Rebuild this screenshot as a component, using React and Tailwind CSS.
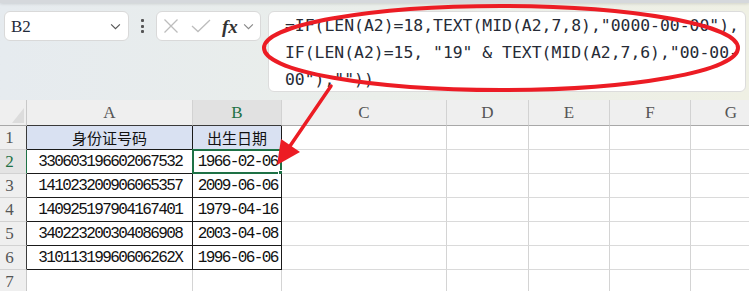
import React from "react";

const COLS = [
  { k: "A", w: "w-[166px]" },
  { k: "B", w: "w-[89px]" },
  { k: "C", w: "w-[165px]" },
  { k: "D", w: "w-[82px]" },
  { k: "E", w: "w-[81px]" },
  { k: "F", w: "w-[81px]" },
  { k: "G", w: "w-[81px]" },
];

const DATA = [
  ["身份证号码", "出生日期"],
  ["330603196602067532", "1966-02-06"],
  ["141023200906065357", "2009-06-06"],
  ["140925197904167401", "1979-04-16"],
  ["340223200304086908", "2003-04-08"],
  ["31011319960606262X", "1996-06-06"],
  ["", ""],
];

const serif = { fontFamily: '"Liberation Serif", "DejaVu Serif", serif' };

function Chevron({ className }) {
  return (
    <svg viewBox="0 0 12 8" className={className} fill="none" stroke="currentColor" strokeWidth="1.3">
      <path d="M1 1.5 L6 6.5 L11 1.5" />
    </svg>
  );
}

function Toolbar() {
  return (
    <div className="h-[100px] bg-gradient-to-r from-[#e6ebef] via-[#eaeeea] to-[#eff0e4] relative">
      <div className="h-[3px] bg-[#d5d8dc] shadow-[0_1px_3px_rgba(0,0,0,0.12)]" />
      <div className="flex items-start pt-[8px]">
        {/* name box */}
        <div className="ml-[4px] w-[125px] h-[30px] bg-white border border-[#d9d9d9] rounded-[6px] flex items-center pl-[6px] pr-[7px]">
          <span className="text-[17px] text-[#1f2a3a] leading-none flex-1" style={serif}>B2</span>
          <Chevron className="w-[11px] h-[7px] text-[#555]" />
        </div>
        {/* dots */}
        <div className="w-[27px] h-[30px] flex flex-col items-center justify-center gap-[2.5px]">
          <div className="w-[3px] h-[3px] bg-[#555] rounded-[1px]" />
          <div className="w-[3px] h-[3px] bg-[#555] rounded-[1px]" />
          <div className="w-[3px] h-[3px] bg-[#555] rounded-[1px]" />
        </div>
        {/* fx box */}
        <div className="w-[105px] h-[30px] bg-white border border-[#d9d9d9] rounded-[6px] flex items-center pl-[6px]">
          <svg viewBox="0 0 16 16" className="w-[16px] h-[16px] text-[#bdbdbd]" fill="none" stroke="currentColor" strokeWidth="1.3">
            <path d="M1.5 1.5 L14.5 14.5 M14.5 1.5 L1.5 14.5" />
          </svg>
          <svg viewBox="0 0 20 14" className="ml-[12px] w-[20px] h-[14px] text-[#bdbdbd]" fill="none" stroke="currentColor" strokeWidth="1.3">
            <path d="M1 7 L7 12.5 L19 1" />
          </svg>
          <span className="ml-[11px] text-[19px] italic font-bold text-[#333] leading-none" style={serif}>fx</span>
          <Chevron className="ml-[5px] w-[11px] h-[7px] text-[#888]" />
        </div>
        {/* formula box */}
        <div
          className="ml-[7px] w-[478px] h-[81px] bg-white border border-[#dcdcdc] rounded-[6px] pl-[16px] text-[16.4px] leading-[27px] text-[#262b36] whitespace-pre"
          style={{ fontFamily: '"DejaVu Sans Mono", "Liberation Mono", monospace' }}
        >
          <div>{'=IF(LEN(A2)=18,TEXT(MID(A2,7,8),"0000-00-00"),'}</div>
          <div>{'IF(LEN(A2)=15, "19" & TEXT(MID(A2,7,6),"00-00-'}</div>
          <div>{'00"),""))'}</div>
        </div>
      </div>
    </div>
  );
}

function HeaderRow() {
  return (
    <div className="flex h-[26px]">
      <div className="w-[27px] h-full bg-[#efefef] border-r border-b border-r-[#c8c8c8] border-b-[#a8a8a8] relative flex items-end justify-end pr-[2px] pb-[2px]">
        <svg viewBox="0 0 12 15" className="w-[12px] h-[15px]">
          <polygon points="12,0 12,15 0,15" fill="#dcdcdc" />
        </svg>
      </div>
      {COLS.map((c) => {
        const sel = c.k === "B";
        const tbl = c.k === "A" || c.k === "B";
        return (
          <div
            key={c.k}
            className={`${c.w} h-full shrink-0 border-r border-b border-r-[#d2d2d2] ${tbl ? "border-b-[#3a3a3a]" : "border-b-[#a8a8a8]"} ${sel ? "bg-[#e1e1e1] text-[#1e7145]" : "bg-[#efefef] text-[#555]"} flex items-center justify-center text-[17px] leading-none`}
            style={serif}
          >
            {c.k}
          </div>
        );
      })}
    </div>
  );
}

function Row({ n, cells }) {
  const inTable = n <= 6;
  const selRow = n === 2;
  const head = n === 1;
  return (
    <div className="flex h-[24px]">
      <div
        className={`w-[27px] h-full shrink-0 border-b border-r border-b-[#d2d2d2] ${selRow ? "border-r-[#1e7145] bg-[#e4e4e4] text-[#1e7145]" : inTable ? "border-r-[#3a3a3a] bg-[#efefef] text-[#555]" : "border-r-[#c8c8c8] bg-[#efefef] text-[#555]"} flex items-center pl-[4px] text-[17px] leading-none`}
        style={serif}
      >
        <span className="w-[11px] text-center">{n}</span>
      </div>
      {COLS.map((c, i) => {
        const isTbl = inTable && i < 2;
        const txt = i < 2 ? cells[i] : "";
        const isSel = n === 2 && c.k === "B";
        return (
          <div
            key={c.k}
            className={`${c.w} h-full shrink-0 border-r border-b relative ${isTbl ? "border-[#1a1a1a]" : "border-r-[#d4d4d4] border-b-[#dadada]"} ${head && isTbl ? "bg-[#d9e1f2]" : "bg-white"} flex items-center justify-center text-[#111] overflow-visible`}
          >
            {head && isTbl ? (
              <span className="text-[15px] leading-none" style={{ fontFamily: '"Noto Sans CJK SC", "Noto Sans", sans-serif' }}>
                {txt}
              </span>
            ) : (
              <span
                className="text-[16px] leading-none tracking-[-1.6px] pl-[1.6px] whitespace-nowrap"
                style={{ fontFamily: '"Liberation Mono", "DejaVu Sans Mono", monospace' }}
              >
                {txt}
              </span>
            )}
            {isSel && (
              <>
                <div className="absolute -left-[1px] -top-[1px] w-[90px] h-[25px] border-2 border-[#1e7145] pointer-events-none" />
                <div className="absolute -right-[3px] -bottom-[3px] w-[6px] h-[6px] bg-[#1e7145] border border-white" />
              </>
            )}
          </div>
        );
      })}
    </div>
  );
}

export default function App() {
  return (
    <div className="w-[749px] h-[291px] relative overflow-hidden bg-white">
      <Toolbar />
      <div className="w-[749px] overflow-hidden">
        <div className="w-[772px]">
          <HeaderRow />
          {DATA.map((cells, i) => (
            <Row key={i} n={i + 1} cells={cells} />
          ))}
        </div>
      </div>
      <svg className="absolute left-0 top-0 pointer-events-none" width="749" height="291" viewBox="0 0 749 291">
        <ellipse cx="501" cy="48" rx="237" ry="42" fill="none" stroke="#ec1c24" strokeWidth="4" />
        <line x1="331" y1="86" x2="290" y2="146" stroke="#ec1c24" strokeWidth="3.5" strokeLinecap="round" />
        <polygon points="277,165 281,139 300,152" fill="#ec1c24" />
      </svg>
    </div>
  );
}
